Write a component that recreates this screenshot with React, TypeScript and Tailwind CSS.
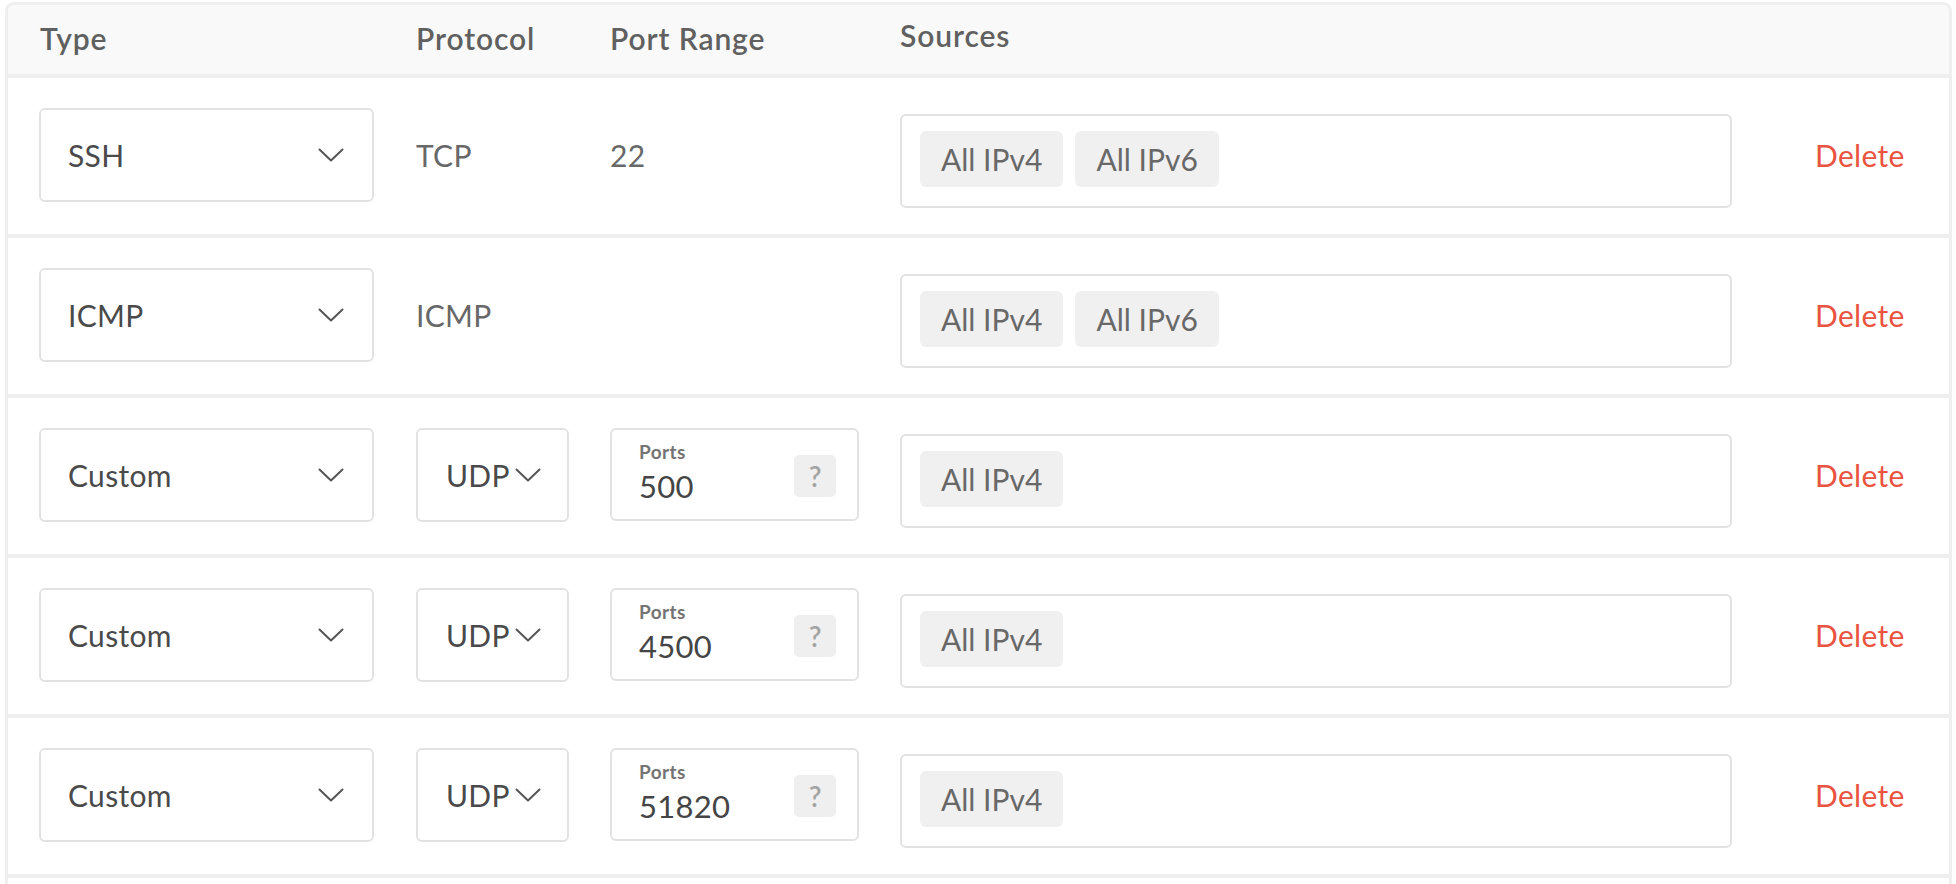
import React from 'react';

type Rule = {
  type: string;
  protocol: string;
  editable: boolean;
  port?: string;
  sources: string[];
};

const rules: Rule[] = [
  { type: 'SSH', protocol: 'TCP', editable: false, port: '22', sources: ['All IPv4', 'All IPv6'] },
  { type: 'ICMP', protocol: 'ICMP', editable: false, sources: ['All IPv4', 'All IPv6'] },
  { type: 'Custom', protocol: 'UDP', editable: true, port: '500', sources: ['All IPv4'] },
  { type: 'Custom', protocol: 'UDP', editable: true, port: '4500', sources: ['All IPv4'] },
  { type: 'Custom', protocol: 'UDP', editable: true, port: '51820', sources: ['All IPv4'] },
];

const Chevron: React.FC = () => (
  <svg width="26" height="14" viewBox="0 0 26 14" fill="none" className="shrink-0">
    <path d="M1.5 1.5 L13 12.5 L24.5 1.5" stroke="#555" strokeWidth="2" strokeLinecap="round" strokeLinejoin="round" />
  </svg>
);

const RuleRow: React.FC<{ rule: Rule }> = ({ rule }) => (
  <div className="flex items-start h-[160px] pt-[30px] border-b-[4px] border-[#efefef] bg-white">
    {/* Type */}
    <div className="w-[408px] pl-[31px] shrink-0">
      <div className="w-[335px] h-[94px] border-2 border-[#e2e2e2] rounded-[6px] flex items-center justify-between pl-[27px] pr-[28px]">
        <span className="text-[30px] leading-none tracking-[0.3px] text-[#4a4a4a]">{rule.type}</span>
        <Chevron />
      </div>
    </div>

    {/* Protocol */}
    <div className="w-[194px] shrink-0">
      {rule.editable ? (
        <div className="w-[153px] h-[94px] border-2 border-[#e2e2e2] rounded-[6px] flex items-center justify-between pl-[28px] pr-[26px]">
          <span className="text-[30px] leading-none tracking-[0.3px] text-[#4a4a4a]">{rule.protocol}</span>
          <Chevron />
        </div>
      ) : (
        <div className="h-[94px] flex items-center text-[30px] leading-none tracking-[0.3px] text-[#686868]">{rule.protocol}</div>
      )}
    </div>

    {/* Port range */}
    <div className="w-[290px] shrink-0">
      {rule.editable ? (
        <div className="w-[249px] h-[93px] border-2 border-[#e2e2e2] rounded-[6px] flex items-center justify-between pl-[27px] pr-[21px]">
          <div className="flex flex-col self-start pt-[12px]">
            <span className="text-[19px] leading-none font-bold tracking-[0.4px] text-[#747474]">Ports</span>
            <span className="text-[31px] leading-none tracking-[0.3px] text-[#454545] mt-[10px]">{rule.port}</span>
          </div>
          <div className="w-[42px] h-[42px] rounded-[5px] bg-[#efefef] flex items-center justify-center text-[28px] leading-none font-semibold text-[#a3a3a3] mt-[2px]">
            ?
          </div>
        </div>
      ) : (
        <div className="h-[94px] flex items-center text-[30px] leading-none tracking-[0.3px] text-[#686868]">{rule.port}</div>
      )}
    </div>

    {/* Sources */}
    <div className="w-[832px] shrink-0 mt-[6px] h-[94px] border-2 border-[#e2e2e2] rounded-[6px] pt-[15px] pl-[18px] flex gap-[12px] items-start">
      {rule.sources.map(s => (
        <span
          key={s}
          className="h-[56px] px-[21px] rounded-[6px] bg-[#f0f0f0] flex items-center text-[30px] leading-none text-[#686868]"
        >
          {s}
        </span>
      ))}
    </div>

    {/* Delete */}
    <div className="ml-[83px] h-[94px] flex items-center text-[30px] leading-none tracking-[0.3px] text-[#ea5340] cursor-pointer">
      Delete
    </div>
  </div>
);

export default function App() {
  return (
    <div className="min-h-screen bg-white" style={{ fontFamily: 'Lato, "Open Sans", sans-serif' }}>
      <div className="ml-[5px] mt-[2px] w-[1947px] border-[3px] border-b-0 border-[#efefef] rounded-t-[9px] overflow-hidden">
        {/* Header */}
        <div className="flex items-start h-[73px] bg-[#f9f9f9] border-b-[4px] border-[#efefef] text-[30px] leading-none font-semibold tracking-[0.9px] text-[#606060]">
          <div className="w-[408px] pl-[32px] pt-[18px] shrink-0">Type</div>
          <div className="w-[194px] pt-[18px] shrink-0">Protocol</div>
          <div className="w-[290px] pt-[18px] shrink-0">Port Range</div>
          <div className="pt-[15px]">Sources</div>
        </div>

        {rules.map((rule, i) => (
          <RuleRow key={i} rule={rule} />
        ))}

        <div className="h-[40px] bg-white" />
      </div>
    </div>
  );
}
